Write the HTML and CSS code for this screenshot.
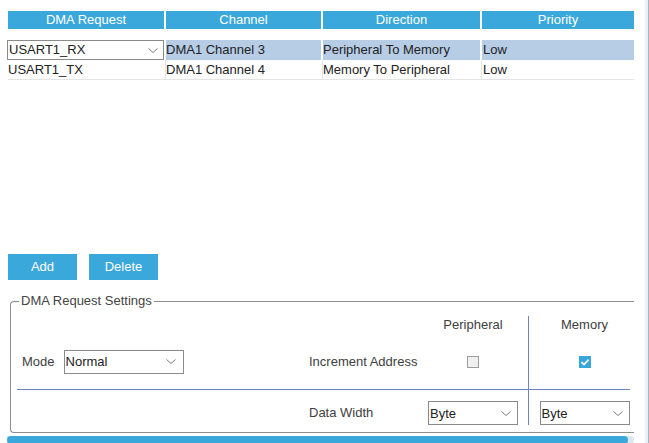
FILE: index.html
```html
<!DOCTYPE html>
<html>
<head>
<meta charset="utf-8">
<link rel="stylesheet" href="styles.css">
</head>
<body>
<div class="page">
  <div class="main">
    <div class="table">
      <div class="th">DMA Request</div>
      <div class="th">Channel</div>
      <div class="th">Direction</div>
      <div class="th last">Priority</div>

      <div class="td sel-cell">
        <div class="select row-select"><span>USART1_RX</span>
          <svg width="10" height="5" viewBox="0 0 10 5"><path d="M0.5 0.5 L5 4.5 L9.5 0.5" stroke="#7a7a7a" fill="none"/></svg>
        </div>
      </div>
      <div class="td hl">DMA1 Channel 3</div>
      <div class="td hl">Peripheral To Memory</div>
      <div class="td hl last">Low</div>

      <div class="td r2">USART1_TX</div>
      <div class="td r2">DMA1 Channel 4</div>
      <div class="td r2">Memory To Peripheral</div>
      <div class="td r2 last">Low</div>
    </div>

    <div class="buttons">
      <div class="btn">Add</div>
      <div class="btn">Delete</div>
    </div>

    <fieldset class="settings">
      <legend>DMA Request Settings</legend>
      <div class="grid">
        <div class="g c1 hdr"></div>
        <div class="g c2 hdr"></div>
        <div class="g c3 hdr">Peripheral</div>
        <div class="g c4 hdr">Memory</div>

        <div class="g c1 row1">
          <span class="label">Mode</span>
          <div class="select mode-select"><span>Normal</span>
            <svg width="10" height="5" viewBox="0 0 10 5"><path d="M0.5 0.5 L5 4.5 L9.5 0.5" stroke="#7a7a7a" fill="none"/></svg>
          </div>
        </div>
        <div class="g c2 row1"><span class="label">Increment Address</span></div>
        <div class="g c3 row1"><span class="cb"></span></div>
        <div class="g c4 row1"><span class="cb on"><svg width="12" height="12" viewBox="0 0 12 12"><path d="M2.5 6.2 L5 8.6 L9.6 3.6" stroke="#fff" stroke-width="1.6" fill="none"/></svg></span></div>

        <div class="g c1 row2"></div>
        <div class="g c2 row2"><span class="label lh">Data Width</span></div>
        <div class="g c3 row2">
          <div class="select dw-select"><span>Byte</span>
            <svg width="10" height="5" viewBox="0 0 10 5"><path d="M0.5 0.5 L5 4.5 L9.5 0.5" stroke="#7a7a7a" fill="none"/></svg>
          </div>
        </div>
        <div class="g c4 row2">
          <div class="select dw-select"><span>Byte</span>
            <svg width="10" height="5" viewBox="0 0 10 5"><path d="M0.5 0.5 L5 4.5 L9.5 0.5" stroke="#7a7a7a" fill="none"/></svg>
          </div>
        </div>
      </div>
    </fieldset>

    <div class="hscroll"><div class="thumb"></div></div>
  </div>
  <div class="vscroll"></div>
</div>
</body>
</html>
```

FILE: styles.css
```css
html, body {
  margin: 0;
  padding: 0;
  background: #fff;
  overflow: hidden;
}
body {
  font-family: "Liberation Sans", Arial, sans-serif;
  font-size: 13px;
  color: #222;
}
.page {
  display: flex;
  width: 649px;
  height: 443px;
  overflow: hidden;
}
.main {
  width: 645px;
  padding-top: 11px;
  box-sizing: border-box;
}
.vscroll {
  width: 4px;
  height: 443px;
  background: #eef0f3;
  border-right: 1px solid #a5b5c1;
  box-sizing: border-box;
}

/* table */
.table {
  margin-left: 8px;
  width: 626px;
  display: grid;
  grid-template-columns: 158px 157px 159px 152px;
  grid-template-rows: 18px 20px 20px;
  row-gap: 0;
}
.th {
  background: #3ba8db;
  color: #fff;
  margin-right: 2px;
  text-align: center;
  line-height: 18px;
  height: 18px;
  margin-bottom: 11px;
}
.th.last { margin-right: 0; }
.table { grid-template-rows: 29px 20px 20px; }
.td {
  line-height: 19px;
  height: 20px;
  box-sizing: border-box;
  white-space: nowrap;
}
.hl {
  background: #b7cde6;
  border-right: 2px solid #fff;
  padding-left: 0;
}
.hl.last { border-right: none; padding-left: 1px; }
.sel-cell {
  border-right: 2px solid #fff;
  margin-left: -1px;
}
.r2 {
  border-right: 1px solid #e4e4e4;
  border-bottom: 1px solid #e4e4e4;
  line-height: 19px;
}
.r2.last { border-right: none; padding-left: 1px; }

.select {
  display: flex;
  align-items: center;
  justify-content: space-between;
  background: #fff;
  border: 1px solid #8a8a8a;
  box-sizing: border-box;
  color: #222;
}
.row-select {
  height: 20px;
  padding: 0 5px 0 1px;
  line-height: 18px;
}
.mode-select {
  width: 120px;
  height: 24px;
  padding: 0 7px 0 1px;
}
.dw-select {
  width: 90px;
  height: 24px;
  padding: 0 6px 0 1px;
}

/* buttons */
.buttons {
  display: flex;
  gap: 12px;
  margin-left: 8px;
  margin-top: 174px;
}
.btn {
  width: 69px;
  height: 26px;
  line-height: 26px;
  background: #3ba8db;
  color: #fff;
  text-align: center;
}

/* settings */
.settings {
  margin: 13px 0 0 10px;
  padding: 7px 0 7px 6px;
  width: 624px;
  box-sizing: border-box;
  border: 1px solid #8e8e8e;
  border-right: none;
  border-radius: 4px 0 0 4px;
  min-width: 0;
}
.settings legend {
  padding: 0 2px;
  margin-left: 2px;
  line-height: 16px;
  color: #444;
}
.grid {
  display: grid;
  grid-template-columns: 292px 109px 111px 101px;
  grid-template-rows: 18px 55px 36px;
}
.g {
  display: flex;
  align-items: center;
  box-sizing: border-box;
  color: #3e3e3e;
}
.hdr { justify-content: center; line-height: 18px; }
.c3 { border-right: 1px solid #6c86bd; justify-content: center; }
.c4 { justify-content: center; padding-left: 10px; }
.row2 { border-top: 1px solid #6c86bd; align-items: flex-end; }
.c1.row1 { padding-left: 5px; gap: 9px; }
.label { white-space: nowrap; }
.lh { line-height: 24px; }

.cb {
  width: 12px;
  height: 12px;
  box-sizing: border-box;
  border: 1px solid #9c9c9c;
  background: #f0f0f0;
  display: block;
}
.cb.on {
  border: none;
  background: #3aa7dc;
}
.cb svg { display: block; }

/* horizontal scrollbar */
.hscroll {
  margin: 3px 0 0 7px;
  width: 627px;
  height: 8px;
  background: #d9e8f5;
  border-radius: 0 4px 4px 0;
}
.thumb {
  width: 621px;
  height: 8px;
  background: #3ba8db;
  border-radius: 4px;
}
```
